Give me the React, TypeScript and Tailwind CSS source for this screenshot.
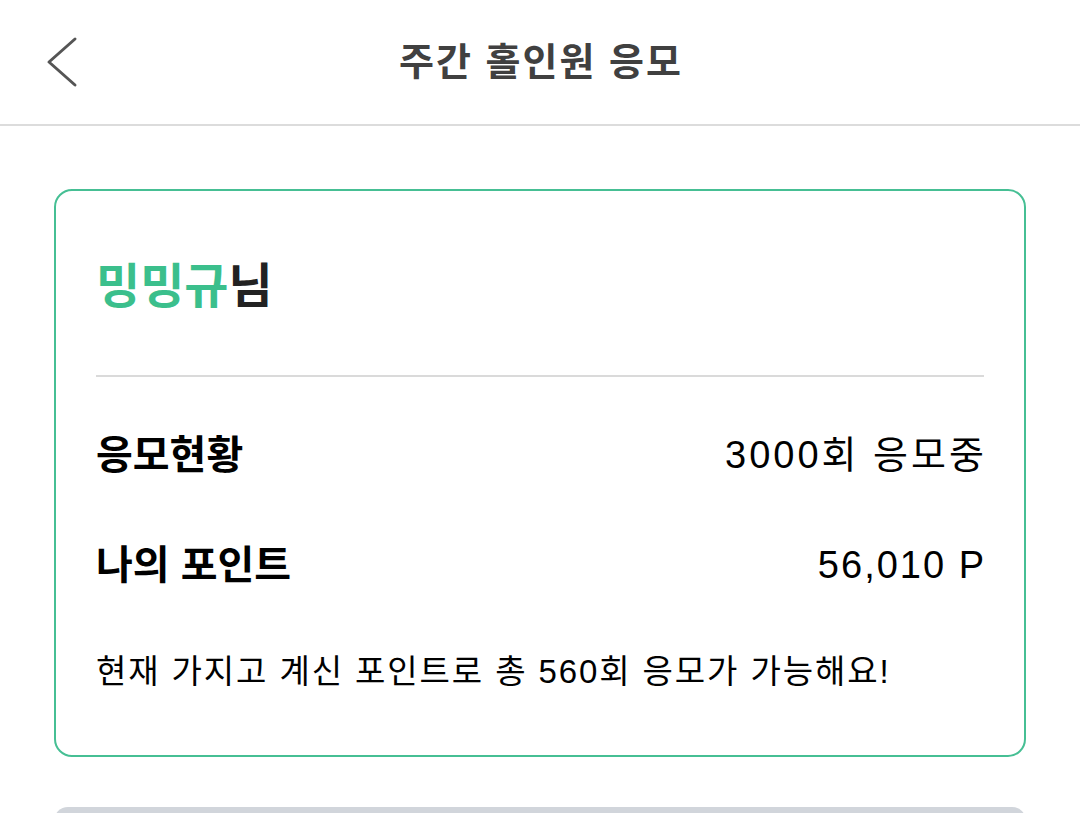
import React from "react";

export default function App() {
  const font = { fontFamily: '"Liberation Sans", "Noto Sans CJK KR", sans-serif' };
  return (
    <div className="w-[1080px] h-[813px] bg-white overflow-hidden" style={font}>
      <div className="relative h-[126px] border-b-2 border-[#dcdcdc] flex items-center justify-center">
        <svg
          className="absolute left-[44px] top-[36px]"
          width="36"
          height="52"
          viewBox="0 0 36 52"
          fill="none"
        >
          <path d="M31 3 L5 26 L31 49" stroke="#555555" strokeWidth="3" strokeLinecap="round" strokeLinejoin="round" />
        </svg>
        <div className="text-[38px] leading-[50px] font-bold text-[#404040] tracking-[2px] pl-[2px]">주간 홀인원 응모</div>
      </div>
      <div className="mx-[54px] mt-[63px] border-2 border-[#46bf94] rounded-[18px] px-[40px]">
        <div className="pt-[66px] pb-[58px] text-[48px] leading-[60px] font-bold">
          <span className="text-[#3bbf8c]">밍밍규</span>
          <span className="text-[#222222]">님</span>
        </div>
        <div className="h-[2px] bg-[#dadada]" />
        <div className="mt-[53px] flex justify-between items-center h-[50px]">
          <div className="text-[40px] font-bold text-black">응모현황</div>
          <div className="text-[38px] text-black tracking-[3px] -mr-[3px]">3000회 응모중</div>
        </div>
        <div className="mt-[60px] flex justify-between items-center h-[50px]">
          <div className="text-[40px] font-bold text-black">나의 포인트</div>
          <div className="text-[38px] text-black tracking-[2px] -mr-[2px]">56,010 P</div>
        </div>
        <div className="mt-[62px] pb-[63px] text-[33px] leading-[40px] text-black tracking-[1.9px]">
          현재 가지고 계신 포인트로 총 560회 응모가 가능해요!
        </div>
      </div>
      <div className="mx-[54px] mt-[50px] h-[30px] bg-[#d1d5db] rounded-t-[14px]" />
    </div>
  );
}
